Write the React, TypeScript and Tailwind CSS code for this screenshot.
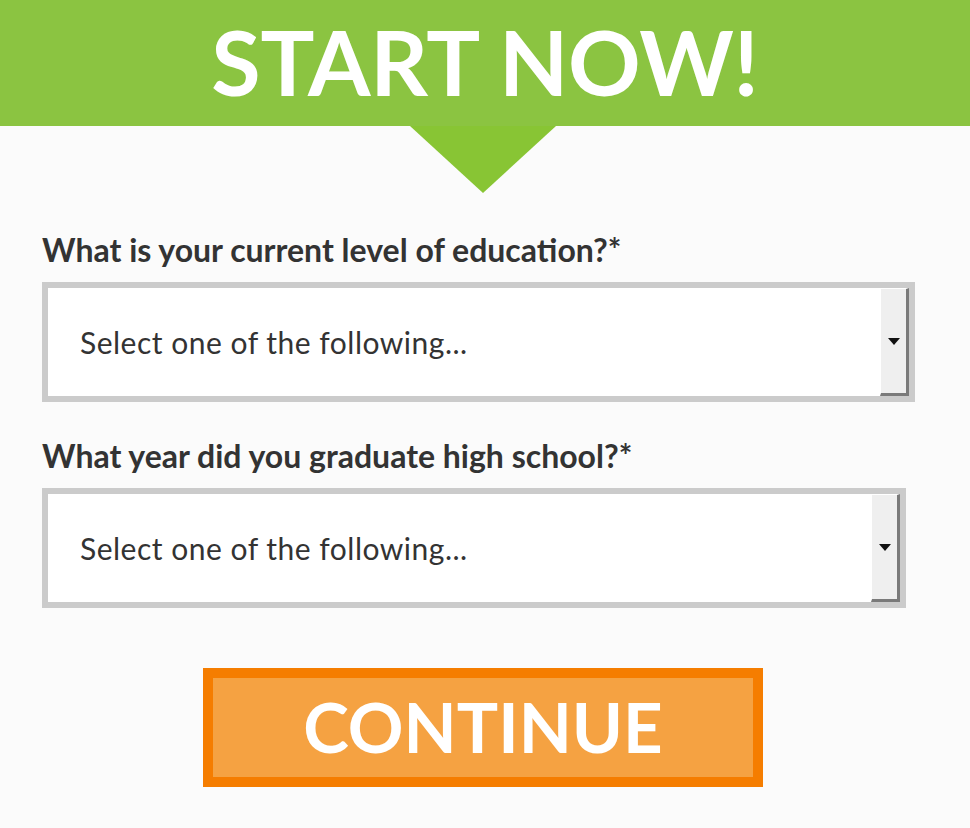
import React from 'react';

const SelectBox: React.FC<{ width: string }> = ({ width }) => (
  <div className={`${width} h-[120px] border-[6px] border-[#cbcbcb] bg-white flex items-stretch`}>
    <div className="flex-1 flex items-center pl-[32px] text-[30px] tracking-[0.5px] text-[#333]">
      Select one of the following...
    </div>
    <div className="w-[29px] flex items-center justify-center bg-[#efefef] border-t border-l border-t-white border-l-white border-r-[3px] border-b-[3px] border-r-[#7a7a7a] border-b-[#7a7a7a]">
      <svg width="12" height="7" viewBox="0 0 12 7">
        <path d="M0 0h12L6 7z" fill="#111" />
      </svg>
    </div>
  </div>
);

export default function App() {
  return (
    <div className="min-h-[828px] bg-[#fbfbfb] font-['Lato','Liberation_Sans',sans-serif]">
      <div className="relative h-[126px] bg-[#8bc441] flex items-center justify-center">
        <h1 className="text-[90px] font-bold text-white leading-none pb-[4px] tracking-[-0.2px]">START NOW!</h1>
        <div className="absolute left-[410px] top-[126px] w-0 h-0 border-l-[73px] border-r-[73px] border-t-[67px] border-l-transparent border-r-transparent border-t-[#88c534]" />
      </div>

      <div className="pl-[42px] pt-[104px]">
        <label className="block text-[32px] font-bold text-[#333] leading-[40px]">What is your current level of education?*</label>
        <div className="mt-[12px]">
          <SelectBox width="w-[873px]" />
        </div>

        <label className="block mt-[34px] text-[32px] font-bold text-[#333] leading-[40px]">What year did you graduate high school?*</label>
        <div className="mt-[12px]">
          <SelectBox width="w-[864px]" />
        </div>
      </div>

      <div className="pl-[203px] pt-[60px]">
        <button className="w-[560px] h-[119px] border-[10px] border-[#f57d00] bg-[#f5a242] text-white text-[69px] font-bold leading-none flex items-center justify-center pb-[2px]">
          CONTINUE
        </button>
      </div>
    </div>
  );
}
